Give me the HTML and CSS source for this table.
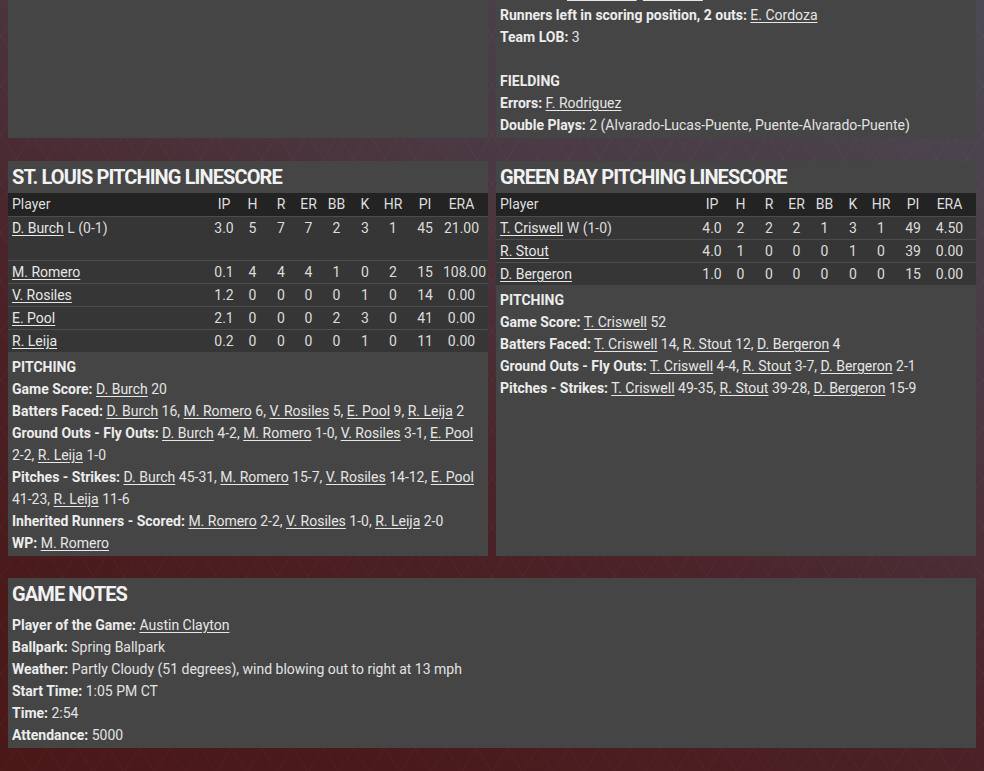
FILE: index.html
```html
<!DOCTYPE html>
<html lang="en">
<head>
<meta charset="utf-8">
<title>Box Score</title>
<link rel="stylesheet" href="styles.css">
</head>
<body>
<div class="page">
  <div class="row row-top">
    <section class="panel"></section>
    <section class="panel">
      <div class="text">
        <div class="line"><b>2-out RBI:</b> <a href="#">J. Alvarado</a>, <a href="#">A. Puente</a></div>
        <div class="line"><b>Runners left in scoring position, 2 outs:</b> <a href="#">E. Cordoza</a></div>
        <div class="line"><b>Team LOB:</b> 3</div>
        <div class="line">&nbsp;</div>
        <div class="line"><b>FIELDING</b></div>
        <div class="line"><b>Errors:</b> <a href="#">F. Rodriguez</a></div>
        <div class="line"><b>Double Plays:</b> 2 (Alvarado-Lucas-Puente, Puente-Alvarado-Puente)</div>
      </div>
    </section>
  </div>

  <div class="row">
    <section class="panel">
      <h2 class="title">ST. LOUIS PITCHING LINESCORE</h2>
      <table class="score">
        <colgroup>
          <col><col class="c-ip"><col class="c-h"><col class="c-r"><col class="c-er"><col class="c-bb"><col class="c-k"><col class="c-hr"><col class="c-pi"><col class="c-era">
        </colgroup>
        <thead>
          <tr><th class="name">Player</th><th>IP</th><th>H</th><th>R</th><th>ER</th><th>BB</th><th>K</th><th>HR</th><th>PI</th><th class="era">ERA</th></tr>
        </thead>
        <tbody>
          <tr class="tall"><td class="name"><a href="#">D. Burch</a> L (0-1)</td><td>3.0</td><td>5</td><td>7</td><td>7</td><td>2</td><td>3</td><td>1</td><td>45</td><td class="era">21.00</td></tr>
          <tr><td class="name"><a href="#">M. Romero</a></td><td>0.1</td><td>4</td><td>4</td><td>4</td><td>1</td><td>0</td><td>2</td><td>15</td><td class="era">108.00</td></tr>
          <tr><td class="name"><a href="#">V. Rosiles</a></td><td>1.2</td><td>0</td><td>0</td><td>0</td><td>0</td><td>1</td><td>0</td><td>14</td><td class="era">0.00</td></tr>
          <tr><td class="name"><a href="#">E. Pool</a></td><td>2.1</td><td>0</td><td>0</td><td>0</td><td>2</td><td>3</td><td>0</td><td>41</td><td class="era">0.00</td></tr>
          <tr><td class="name"><a href="#">R. Leija</a></td><td>0.2</td><td>0</td><td>0</td><td>0</td><td>0</td><td>1</td><td>0</td><td>11</td><td class="era">0.00</td></tr>
        </tbody>
      </table>
      <div class="text">
        <div class="line"><b>PITCHING</b></div>
        <div class="line"><b>Game Score:</b> <a href="#">D. Burch</a> 20</div>
        <div class="line"><b>Batters Faced:</b> <a href="#">D. Burch</a> 16, <a href="#">M. Romero</a> 6, <a href="#">V. Rosiles</a> 5, <a href="#">E. Pool</a> 9, <a href="#">R. Leija</a> 2</div>
        <div class="line"><b>Ground Outs - Fly Outs:</b> <a href="#">D. Burch</a> 4-2, <a href="#">M. Romero</a> 1-0, <a href="#">V. Rosiles</a> 3-1, <a href="#">E. Pool</a> 2-2, <a href="#">R. Leija</a> 1-0</div>
        <div class="line"><b>Pitches - Strikes:</b> <a href="#">D. Burch</a> 45-31, <a href="#">M. Romero</a> 15-7, <a href="#">V. Rosiles</a> 14-12, <a href="#">E. Pool</a> 41-23, <a href="#">R. Leija</a> 11-6</div>
        <div class="line"><b>Inherited Runners - Scored:</b> <a href="#">M. Romero</a> 2-2, <a href="#">V. Rosiles</a> 1-0, <a href="#">R. Leija</a> 2-0</div>
        <div class="line"><b>WP:</b> <a href="#">M. Romero</a></div>
      </div>
    </section>

    <section class="panel">
      <h2 class="title">GREEN BAY PITCHING LINESCORE</h2>
      <table class="score">
        <colgroup>
          <col><col class="c-ip"><col class="c-h"><col class="c-r"><col class="c-er"><col class="c-bb"><col class="c-k"><col class="c-hr"><col class="c-pi"><col class="c-era">
        </colgroup>
        <thead>
          <tr><th class="name">Player</th><th>IP</th><th>H</th><th>R</th><th>ER</th><th>BB</th><th>K</th><th>HR</th><th>PI</th><th class="era">ERA</th></tr>
        </thead>
        <tbody>
          <tr><td class="name"><a href="#">T. Criswell</a> W (1-0)</td><td>4.0</td><td>2</td><td>2</td><td>2</td><td>1</td><td>3</td><td>1</td><td>49</td><td class="era">4.50</td></tr>
          <tr><td class="name"><a href="#">R. Stout</a></td><td>4.0</td><td>1</td><td>0</td><td>0</td><td>0</td><td>1</td><td>0</td><td>39</td><td class="era">0.00</td></tr>
          <tr><td class="name"><a href="#">D. Bergeron</a></td><td>1.0</td><td>0</td><td>0</td><td>0</td><td>0</td><td>0</td><td>0</td><td>15</td><td class="era">0.00</td></tr>
        </tbody>
      </table>
      <div class="text">
        <div class="line"><b>PITCHING</b></div>
        <div class="line"><b>Game Score:</b> <a href="#">T. Criswell</a> 52</div>
        <div class="line"><b>Batters Faced:</b> <a href="#">T. Criswell</a> 14, <a href="#">R. Stout</a> 12, <a href="#">D. Bergeron</a> 4</div>
        <div class="line"><b>Ground Outs - Fly Outs:</b> <a href="#">T. Criswell</a> 4-4, <a href="#">R. Stout</a> 3-7, <a href="#">D. Bergeron</a> 2-1</div>
        <div class="line"><b>Pitches - Strikes:</b> <a href="#">T. Criswell</a> 49-35, <a href="#">R. Stout</a> 39-28, <a href="#">D. Bergeron</a> 15-9</div>
      </div>
    </section>
  </div>

  <section class="panel notes">
    <h2 class="title">GAME NOTES</h2>
    <div class="text">
      <div class="line"><b>Player of the Game:</b> <a href="#">Austin Clayton</a></div>
      <div class="line"><b>Ballpark:</b> Spring Ballpark</div>
      <div class="line"><b>Weather:</b> Partly Cloudy (51 degrees), wind blowing out to right at 13 mph</div>
      <div class="line"><b>Start Time:</b> 1:05 PM CT</div>
      <div class="line"><b>Time:</b> 2:54</div>
      <div class="line"><b>Attendance:</b> 5000</div>
    </div>
  </section>
</div>
</body>
</html>
```

FILE: styles.css
```css
html, body {
  margin: 0;
  padding: 0;
}

body {
  min-height: 100vh;
  overflow: hidden;
  font-family: Roboto, "Liberation Sans", Arial, sans-serif;
  font-size: 14px;
  color: #e2e2e2;
  background-color: #4a1c1e;
  background-image:
    repeating-linear-gradient(58deg, rgba(255,255,255,0.025) 0 1px, transparent 1px 26px),
    repeating-linear-gradient(-58deg, rgba(255,255,255,0.025) 0 1px, transparent 1px 26px),
    linear-gradient(205deg, #4b4a54 0%, #4a3a44 30%, #4b2228 60%, #4a1a1b 85%, #4b1818 100%);
}

.page {
  padding: 0 8px;
}

.row {
  display: grid;
  grid-template-columns: 1fr 1fr;
  gap: 8px;
  margin-bottom: 22px;
}

.row-top {
  margin-top: -22px;
  margin-bottom: 23px;
}

.panel {
  background: #454545;
}

.title {
  margin: 0;
  padding: 0 4px;
  height: 32px;
  line-height: 33px;
  font-size: 20px;
  font-weight: 700;
  letter-spacing: -0.9px;
  color: #f2f2f2;
}

.text {
  padding: 4px 4px 2px;
}

.line {
  line-height: 22px;
  min-height: 22px;
}

.line b {
  font-weight: 700;
  color: #ececec;
}

a {
  color: #e6e6e6;
  text-decoration: underline;
  text-underline-offset: 2px;
  white-space: nowrap;
}

.score {
  width: 100%;
  table-layout: fixed;
  border-collapse: collapse;
}

.c-ip { width: 28px; }
.c-h { width: 29px; }
.c-r { width: 28px; }
.c-er { width: 27px; }
.c-bb { width: 29px; }
.c-k { width: 28px; }
.c-hr { width: 28px; }
.c-pi { width: 36px; }
.c-era { width: 45px; }

.score th,
.score td {
  padding: 0;
  text-align: center;
  white-space: nowrap;
  vertical-align: top;
  line-height: 22px;
}

.score th {
  font-weight: 400;
  background: #232323;
  line-height: 23px;
  color: #dedede;
}

.score td {
  background: #363636;
  border-top: 1px solid #4c4c4c;
  color: #dcdcdc;
}

.score .name {
  text-align: left;
  padding-left: 4px;
}

.score .era {
  padding-right: 8px;
}

.score .tall td {
  height: 43px;
}

.notes {
  margin-bottom: 23px;
}
```
